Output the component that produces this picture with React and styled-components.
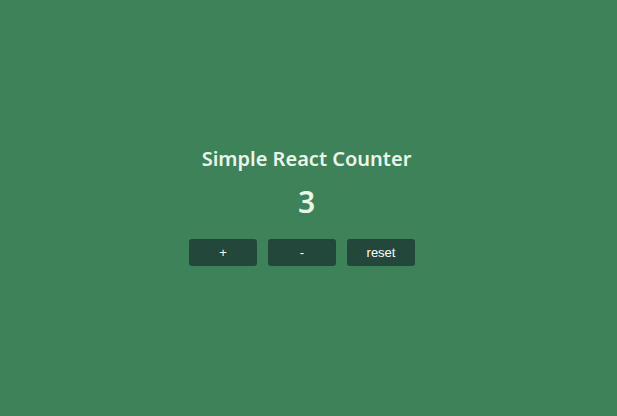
import React, { useState } from "react"
import styled, { createGlobalStyle } from "styled-components"

const GlobalStyle = createGlobalStyle`
  html, body, #root {
    margin: 0;
    height: 100%;
  }
  body {
    background: #3e8259;
    font-family: "Noto Sans", "Open Sans", sans-serif;
  }
`

const App = () => {
  const [count, setCount] = useState(3)

  return (
    <Page>
      <GlobalStyle />
      <Counter>
        <Title>Simple React Counter</Title>
        <Count>{count}</Count>
        <Buttons>
          <Button onClick={() => setCount(count + 1)}>+</Button>
          <Button onClick={() => setCount(count - 1)}>-</Button>
          <Button onClick={() => setCount(0)}>reset</Button>
        </Buttons>
      </Counter>
    </Page>
  )
}

export default App

const Page = styled.div`
  height: 100%;
  display: flex;
  align-items: center;
  justify-content: center;
`

const Counter = styled.div`
  display: flex;
  flex-direction: column;
  align-items: center;
  margin: 0 4px 4px 0;
`

const Title = styled.h1`
  margin: 0;
  font-size: 20px;
  font-weight: 600;
  color: #e9f7e8;
  line-height: 24px;
`

const Count = styled.div`
  margin-top: 13px;
  font-size: 30px;
  font-weight: 600;
  color: #e9f7e8;
  line-height: 36px;
`

const Buttons = styled.div`
  display: flex;
  gap: 11px;
  margin-top: 19px;
  margin-right: 9px;
`

const Button = styled.button`
  width: 68px;
  height: 27px;
  border: none;
  border-radius: 3px;
  background: #23473a;
  color: #ffffff;
  font-family: "Liberation Sans", Arial, sans-serif;
  font-size: 13px;
  cursor: pointer;
`
